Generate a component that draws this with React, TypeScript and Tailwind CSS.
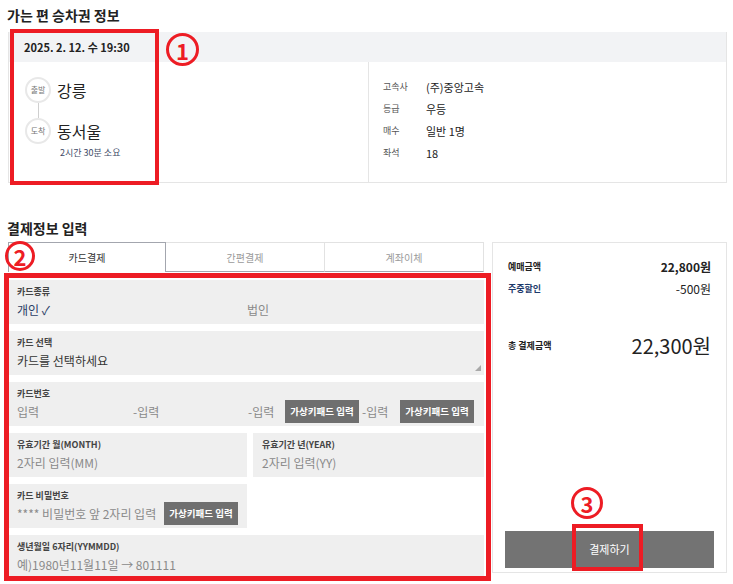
import React from "react";

const font = { fontFamily: '"Noto Sans CJK KR", "Noto Sans", sans-serif' };

function Field({ label, children, className = "" }: { label: string; children: React.ReactNode; className?: string }) {
  return (
    <div className={"bg-[#efefef] h-[44px] pl-[9px] pt-[6px] relative " + className}>
      <div className="text-[9px] leading-[12px] font-bold text-[#444]">{label}</div>
      <div className="text-[12px] leading-[18px] mt-[3px] text-[#8a8a8a]">{children}</div>
    </div>
  );
}

function KeyBtn() {
  return (
    <span className="inline-flex items-center justify-center bg-[#6f6f6f] text-white text-[9.5px] font-bold h-[23px] w-[74px]">
      가상키패드 입력
    </span>
  );
}

function Circled({ n, className }: { n: string; className: string }) {
  return (
    <div
      className={
        "absolute rounded-full border-[3px] border-[#ed1c24] text-[#ed1c24] font-bold flex items-center justify-center text-[22px] leading-none " +
        className
      }
    >
      {n}
    </div>
  );
}

export default function App() {
  return (
    <div className="relative w-[733px] h-[584px] bg-white text-[#222] overflow-hidden" style={font}>
      <div className="pl-[8px] pr-[6px]">
        <h2 className="pt-[5px] h-[32px] text-[14px] font-bold leading-[20px] -ml-[1px]">가는 편 승차권 정보</h2>
        {/* ticket card */}
        <div className="border border-[#e5e5e5] border-t-0 h-[151px]">
          <div className="bg-[#f2f3f5] h-[30px] flex items-center pl-[15px] text-[11px] font-bold">
            2025. 2. 12. 수 19:30
          </div>
          <div className="flex h-[120px]">
            <div className="w-[360px] border-r border-[#e5e5e5] pl-[16px] pt-[15px]">
              <div className="flex items-center">
                <div className="w-[26px] h-[26px] rounded-full border-2 border-[#e8e8e8] flex items-center justify-center text-[8px] text-[#777]">
                  출발
                </div>
                <span className="ml-[6px] text-[16px]">강릉</span>
              </div>
              <div className="w-[1px] h-[15px] bg-[#cfcfcf] ml-[13px]" />
              <div className="flex items-center">
                <div className="w-[26px] h-[26px] rounded-full border-2 border-[#e8e8e8] flex items-center justify-center text-[8px] text-[#777]">
                  도착
                </div>
                <span className="ml-[6px] text-[16px]">동서울</span>
              </div>
              <div className="ml-[35px] mt-[2px] text-[9px] text-[#3e4a66]">2시간 30분 소요</div>
            </div>
            <div className="pl-[14px] pt-[17px] flex flex-col gap-[6px]">
              {[
                ["고속사", "(주)중앙고속"],
                ["등급", "우등"],
                ["매수", "일반 1명"],
                ["좌석", "18"],
              ].map(([k, v]) => (
                <div key={k} className="flex items-center h-[16px]">
                  <span className="w-[43px] text-[9px] text-[#555]">{k}</span>
                  <span className="text-[11px] text-[#222]">{v}</span>
                </div>
              ))}
            </div>
          </div>
        </div>

        <h2 className="mt-[35px] h-[24px] text-[14px] font-bold leading-[20px] -ml-[1px]">결제정보 입력</h2>

        <div className="flex gap-[8px]">
          {/* left */}
          <div className="w-[476px]">
            <div className="flex h-[30px] text-[10px]">
              <div className="w-[158px] border border-[#a3a6ae] border-b-0 flex items-center justify-center text-[#333]">
                카드결제
              </div>
              <div className="w-[159px] border-t border-r border-[#e2e2e2] border-b border-b-[#a3a6ae] flex items-center justify-center text-[#9a9a9a]">
                간편결제
              </div>
              <div className="w-[159px] border-t border-r border-[#e2e2e2] border-b border-b-[#a3a6ae] flex items-center justify-center text-[#9a9a9a]">
                계좌이체
              </div>
            </div>
            <div className="mt-[8px] flex flex-col gap-[7px]">
              <Field label="카드종류">
                <div className="flex">
                  <span className="w-[230px] text-[#2c3e66]">개인 ✓</span>
                  <span>법인</span>
                </div>
              </Field>
              <Field label="카드 선택">
                <span className="text-[#333]">카드를 선택하세요</span>
                <svg className="absolute right-[3px] bottom-[4px]" width="6" height="6" viewBox="0 0 6 6">
                  <path d="M6 0 L6 6 L0 6 Z" fill="#a9a9a9" />
                </svg>
              </Field>
              <div className="bg-[#efefef] h-[44px] pl-[9px] pt-[6px]">
                <div className="text-[9px] leading-[12px] font-bold text-[#444]">카드번호</div>
                <div className="flex items-center text-[12px] text-[#8a8a8a] mt-[0px]">
                  <span className="w-[116px]">입력</span>
                  <span className="w-[115px]">-입력</span>
                  <span className="w-[37px]">-입력</span>
                  <KeyBtn />
                  <span className="ml-[3px] w-[38px]">-입력</span>
                  <KeyBtn />
                </div>
              </div>
              <div className="flex gap-[6px]">
                <Field label="유효기간 월(MONTH)" className="w-[239px]">
                  2자리 입력(MM)
                </Field>
                <Field label="유효기간 년(YEAR)" className="flex-1">
                  2자리 입력(YY)
                </Field>
              </div>
              <div className="flex">
                <div className="w-[239px] bg-[#efefef] h-[44px] pl-[9px] pt-[6px]">
                  <div className="text-[9px] leading-[12px] font-bold text-[#444]">카드 비밀번호</div>
                  <div className="flex items-center text-[12px] text-[#8a8a8a] mt-[0px]">
                    <span className="w-[147px]">**** 비밀번호 앞 2자리 입력</span>
                    <KeyBtn />
                  </div>
                </div>
              </div>
              <Field label="생년월일 6자리(YYMMDD)">
                예)1980년11월11일 → 801111
              </Field>
            </div>
          </div>
          {/* right */}
          <div className="w-[235px] h-[331px] border border-[#e5e5e5] px-[12px] pt-[16px] flex flex-col">
            <div className="flex justify-between items-center h-[16px] px-[3px]">
              <span className="text-[9px] font-bold">예매금액</span>
              <span className="text-[12px] font-bold">22,800원</span>
            </div>
            <div className="flex justify-between items-center h-[16px] mt-[6px] px-[3px]">
              <span className="text-[9px] font-bold text-[#1d3a6b]">주중할인</span>
              <span className="text-[12px]">-500원</span>
            </div>
            <div className="flex justify-between items-center h-[30px] mt-[34px] px-[3px]">
              <span className="text-[9px] font-bold">총 결제금액</span>
              <span className="text-[20px]">22,300원</span>
            </div>
            <div className="flex-1" />
            <div className="h-[37px] bg-[#737373] text-white text-[11px] flex items-center justify-center mb-[4px]">
              결제하기
            </div>
          </div>
        </div>
      </div>

      {/* annotations */}
      <div className="absolute left-[10px] top-[29px] w-[149px] h-[156px] border-4 border-[#ed1c24]" />
      <Circled n="1" className="left-[166px] top-[33px] w-[33px] h-[33px]" />
      <div className="absolute left-[4px] top-[273px] w-[487px] h-[308px] border-[5px] border-[#ed1c24]" />
      <Circled n="2" className="left-[5px] top-[241px] w-[30px] h-[30px]" />
      <div className="absolute left-[572px] top-[524px] w-[71px] h-[47px] border-4 border-[#ed1c24]" />
      <Circled n="3" className="left-[571px] top-[487px] w-[32px] h-[32px]" />
    </div>
  );
}
